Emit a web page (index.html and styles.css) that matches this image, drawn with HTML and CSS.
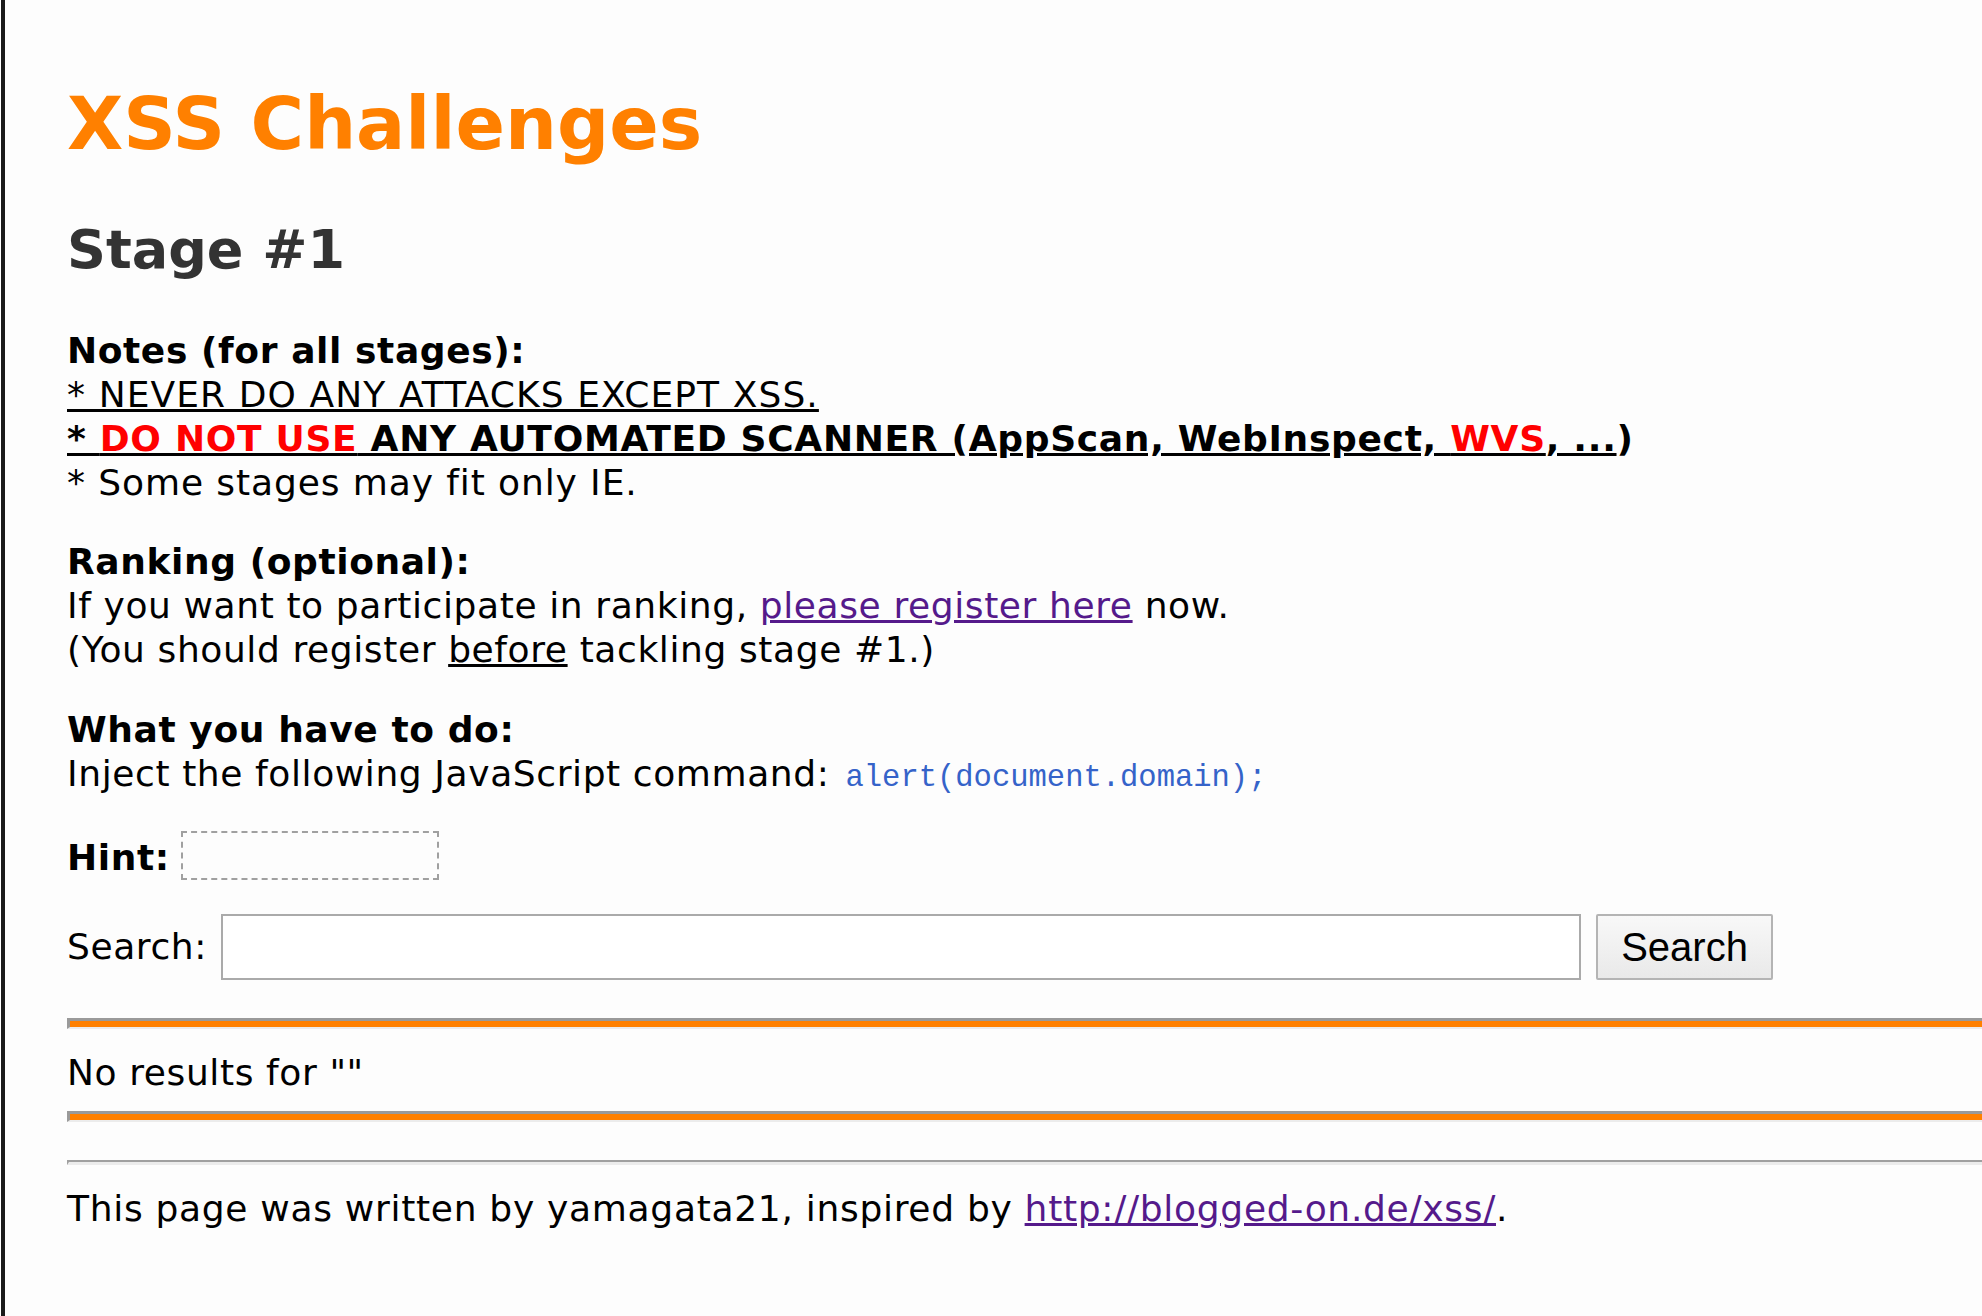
FILE: index.html
```html
<!DOCTYPE html>
<html lang="en">
<head>
<meta charset="utf-8">
<title>XSS Challenges (by yamagata21) - Stage #1</title>
<link rel="stylesheet" href="styles.css">
</head>
<body>
<div class="page">
  <h1 class="title">XSS Challenges</h1>
  <h2 class="stage">Stage #1</h2>

  <p class="block notes">
    <b>Notes (for all stages):</b><br>
    <u class="caps">* NEVER DO ANY ATTACKS EXCEPT XSS.</u><br>
    <b class="warn"><u>* <span class="red">DO NOT USE</span> ANY AUTOMATED SCANNER (AppScan, WebInspect, <span class="red">WVS</span>, ...</u>)</b><br>
    <span class="wide">* Some stages may fit only IE.</span>
  </p>

  <p class="block ranking">
    <b>Ranking (optional):</b><br>
    If you want to participate in ranking, <a class="link" href="#">please register here</a> now.<br>
    (You should register <u>before</u> tackling stage #1.)
  </p>

  <p class="block todo">
    <b>What you have to do:</b><br>
    Inject the following JavaScript command: <code class="code">alert(document.domain);</code>
  </p>

  <div class="hint-row">
    <b class="hint-label">Hint:</b>
    <span class="hint-box"></span>
  </div>

  <form class="search-row" action="#">
    <label class="search-label" for="q">Search:</label>
    <input class="search-input" id="q" type="text" value="">
    <button class="search-btn" type="button">Search</button>
  </form>

  <hr class="bar">
  <p class="result">No results for ""</p>
  <hr class="bar">

  <hr class="rule">
  <p class="footer">This page was written by yamagata21, inspired by <a class="link" href="#">http://blogged-on.de/xss/</a>.</p>
</div>
</body>
</html>
```

FILE: styles.css
```css
html {
  background: #ffffff;
}

body {
  margin: 0 0 0 1px;
  border-left: 4px solid #1a1a1a;
  min-height: 1316px;
  box-sizing: border-box;
  background: #fdfdfd;
  color: #000;
  font-family: "DejaVu Sans", Verdana, sans-serif;
  font-size: 36px;
  line-height: 44px;
}

.page {
  padding: 80px 0 0 62px;
}

.title {
  margin: 0;
  font-size: 73px;
  line-height: 88px;
  font-weight: bold;
  color: #ff8000;
}

.stage {
  margin: 49px 0 0 0;
  font-size: 54px;
  line-height: 66px;
  font-weight: bold;
  color: #333333;
}

.block {
  margin: 0;
  letter-spacing: 0.6px;
}

.caps {
  letter-spacing: 1.1px;
}

.warn {
  letter-spacing: 0.7px;
}

.wide {
  letter-spacing: 0.9px;
}

.notes {
  margin-top: 46px;
}

.ranking {
  margin-top: 35px;
}

.todo {
  margin-top: 36px;
}

.red {
  color: #ff0000;
}

.link {
  color: #551a8b;
  text-decoration: underline;
}

.code {
  font-family: "Liberation Mono", "DejaVu Sans Mono", monospace;
  font-size: 30.5px;
  letter-spacing: 0;
  margin-left: 4px;
  color: #3563c9;
}

.hint-row {
  display: flex;
  align-items: flex-end;
  margin-top: 31px;
  height: 49px;
  letter-spacing: 0.6px;
}

.hint-label {
  margin-right: 11px;
}

.hint-box {
  display: block;
  width: 258px;
  height: 49px;
  box-sizing: border-box;
  border: 2px dashed #a0a0a0;
}

.search-row {
  display: flex;
  align-items: center;
  margin: 34px 0 0 0;
  height: 66px;
}

.search-label {
  margin-right: 14px;
  letter-spacing: 0.6px;
}

.search-input {
  width: 1360px;
  height: 66px;
  box-sizing: border-box;
  margin: 0;
  border: 2px solid #aaaaaa;
  background: #ffffff;
  padding: 0 8px;
  font-size: 36px;
}

.search-btn {
  margin: 0 0 0 15px;
  width: 177px;
  height: 66px;
  box-sizing: border-box;
  border: 2px solid #b4b4b4;
  border-radius: 2px;
  background: linear-gradient(#f8f8f8, #e9e9e9);
  font-family: "Liberation Sans", Arial, sans-serif;
  font-size: 40px;
  color: #000;
  padding: 0;
}

.bar {
  margin: 38px 0 0 0;
  height: 6px;
  border: 0;
  border-top: 3px solid #9a9a9a;
  border-left: 3px solid #9a9a9a;
  border-bottom: 2px solid #ececec;
  background: #ff8000;
}

.result {
  margin: 22px 0 16px 0;
  letter-spacing: 0.6px;
}

.result + .bar {
  margin-top: 0;
}

.rule {
  margin: 38px 0 0 0;
  height: 0;
  border: 0;
  border-top: 2px solid #a0a0a0;
  border-left: 2px solid #a0a0a0;
  border-bottom: 3px solid #ececec;
}

.footer {
  margin: 22px 0 0 0;
  letter-spacing: 0.7px;
}
```
